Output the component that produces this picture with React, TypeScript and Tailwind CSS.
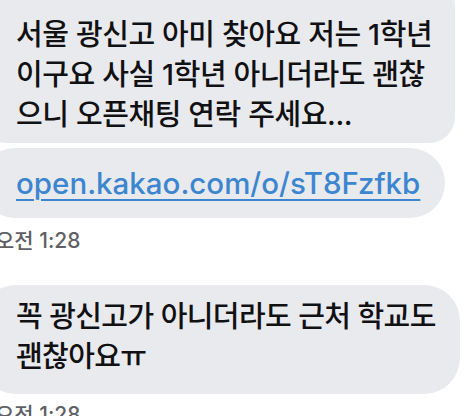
import React from 'react';

const font = { fontFamily: 'Inter, "Noto Sans CJK KR", sans-serif' };

export default function App() {
  return (
    <div className="h-[416px] w-[469px] overflow-hidden bg-white" style={font}>
      <div className="-mt-[20px] flex flex-col">
        <div className="-ml-[20px] w-[475px] rounded-[26px] bg-[#e9eaee] pt-[35px] pb-[8px] pl-[36px] text-[29px] leading-[40px] font-medium tracking-[-0.4px] text-[#111113]">
          <div>서울 광신고 아미 찾아요 저는 1학년</div>
          <div>이구요 사실 1학년 아니더라도 괜찮</div>
          <div>으니 오픈채팅 연락 주세요...</div>
        </div>
        <div className="-ml-[20px] mt-[5px] flex h-[70px] w-[465px] items-center rounded-[36px] bg-[#e9eaee] pl-[36px] text-[29.5px] font-medium">
          <a className="text-[#3c86d0] underline decoration-[2px] underline-offset-[5px]">open.kakao.com/o/sT8Fzfkb</a>
        </div>
        <div className="-ml-[5px] mt-[12px] text-[21px] font-medium leading-[22px] text-[#5f6066]">오전 1:28</div>
        <div className="-ml-[20px] mt-[33px] w-[480px] rounded-[36px] bg-[#e9eaee] pt-[12px] pb-[17px] pl-[36px] text-[29px] leading-[40px] font-medium tracking-[-0.6px] text-[#111113]">
          <div>꼭 광신고가 아니더라도 근처 학교도</div>
          <div>괜찮아요ㅠ</div>
        </div>
        <div className="-ml-[5px] mt-[10px] text-[21px] font-medium leading-[22px] text-[#5f6066]">오전 1:28</div>
      </div>
    </div>
  );
}
